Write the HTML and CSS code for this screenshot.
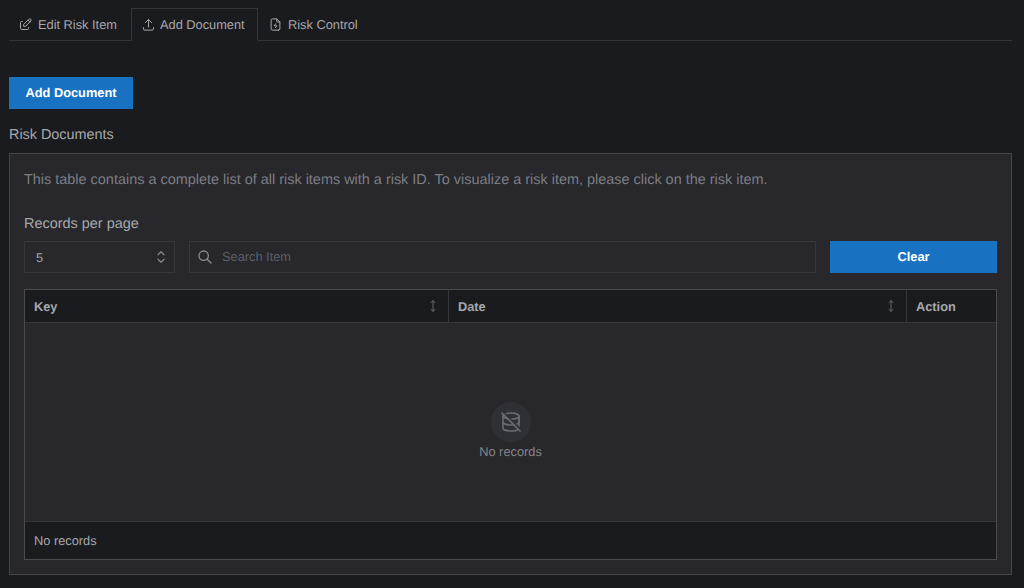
FILE: index.html
```html
<!DOCTYPE html>
<html lang="en">
<head>
<meta charset="utf-8">
<title>Risk Documents</title>
<link rel="stylesheet" href="styles.css">
</head>
<body>
<nav class="tabs">
  <div class="tab tab-first">
    <svg class="tab-icon" viewBox="0 0 24 24"><path d="M7 7h-1a2 2 0 0 0-2 2v9a2 2 0 0 0 2 2h9a2 2 0 0 0 2-2v-1"/><path d="M20.385 6.585a2.1 2.1 0 0 0-2.97-2.970l-8.415 8.385v3h3l8.385-8.415"/><path d="M16 5l3 3"/></svg>
    <span>Edit Risk Item</span>
  </div>
  <div class="tab tab-active">
    <svg class="tab-icon" viewBox="0 0 24 24"><path d="M4 17v2a2 2 0 0 0 2 2h12a2 2 0 0 0 2-2v-2"/><path d="M7 9l5-5 5 5"/><path d="M12 4v12"/></svg>
    <span>Add Document</span>
  </div>
  <div class="tab tab-last">
    <svg class="tab-icon" viewBox="0 0 24 24"><path d="M14 3v4a1 1 0 0 0 1 1h4"/><path d="M17 21h-10a2 2 0 0 1-2-2v-14a2 2 0 0 1 2-2h7l5 5v11a2 2 0 0 1-2 2z"/><path d="M12 11l-2 3h4l-2 3"/></svg>
    <span>Risk Control</span>
  </div>
</nav>

<button class="btn btn-add">Add Document</button>
<h2 class="section-title">Risk Documents</h2>

<section class="panel">
  <p class="intro">This table contains a complete list of all risk items with a risk ID. To visualize a risk item, please click on the risk item.</p>
  <label class="rpp-label">Records per page</label>
  <div class="controls">
    <div class="field select">
      <span>5</span>
      <svg class="chev" viewBox="0 0 24 24"><path d="M8 9l4-4 4 4"/><path d="M16 15l-4 4-4-4"/></svg>
    </div>
    <div class="field search">
      <svg class="search-icon" viewBox="0 0 24 24"><circle cx="10" cy="10" r="7"/><path d="M21 21l-6-6"/></svg>
      <span class="search-text">Search Item</span>
    </div>
    <button class="btn btn-clear">Clear</button>
  </div>
  <div class="table">
    <div class="thead">
      <div class="th th-key"><span>Key</span><svg class="sort" viewBox="0 0 24 24"><path d="M12 4v16"/><path d="M9 7l3-3 3 3"/><path d="M9 17l3 3 3-3"/></svg></div>
      <div class="th th-date"><span>Date</span><svg class="sort" viewBox="0 0 24 24"><path d="M12 4v16"/><path d="M9 7l3-3 3 3"/><path d="M9 17l3 3 3-3"/></svg></div>
      <div class="th th-action"><span>Action</span></div>
    </div>
    <div class="tbody">
      <div class="empty-badge">
        <svg class="empty-icon" viewBox="0 0 24 24"><path d="M12.983 8.978c3.955-.182 7.017-1.446 7.017-2.978c0-1.657-3.582-3-8-3c-1.661 0-3.204.19-4.483.515m-2.783 1.228c-.471.382-.734.808-.734 1.257c0 1.220 1.944 2.271 4.734 2.740"/><path d="M4 6v6c0 1.657 3.582 3 8 3c.986 0 1.930-.067 2.802-.19m3.187-.82c1.251-.53 2.011-1.228 2.011-1.990v-6"/><path d="M4 12v6c0 1.657 3.582 3 8 3c3.217 0 5.991-.712 7.261-1.740m.739-3.260v-9"/><path d="M3 3l18 18"/></svg>
      </div>
      <div class="empty-text">No records</div>
    </div>
    <div class="tfoot">No records</div>
  </div>
</section>
</body>
</html>
```
FILE: styles.css
```css
* { box-sizing: border-box; }
html, body { margin: 0; height: 100%; }
body {
  background: #1a1b1f;
  color: #a6a7ab;
  font-family: "Liberation Sans", Arial, sans-serif;
  font-size: 12.8px;
  text-rendering: geometricPrecision;
  padding: 8px 12px 0 9px;
  overflow: hidden;
}
.tabs {
  display: flex;
  height: 33px;
  border-bottom: 1px solid #33343a;
}
.tab {
  display: flex;
  align-items: center;
  gap: 5px;
  height: 33px;
  padding: 0 14px 0 9px;
  color: #a6a7ab;
  white-space: nowrap;
}
.tab-first { width: 122px; }
.tab-last { padding-left: 10px; }
.tab-active {
  width: 127px;
  border: 1px solid #33343a;
  border-bottom: 1px solid #1a1b1f;
  padding-left: 9px;
  gap: 4px;
}
.tab-icon {
  width: 15px;
  height: 15px;
  fill: none;
  stroke: #a6a7ab;
  stroke-width: 1.6;
  stroke-linecap: round;
  stroke-linejoin: round;
  flex: none;
}
.btn {
  border: 0;
  background: #1971c2;
  color: #fff;
  font: bold 12.8px "Liberation Sans", Arial, sans-serif;
  text-rendering: geometricPrecision;
  padding: 0 0 2px;
  display: block;
}
.btn-add { width: 124px; height: 32px; margin-top: 36px; }
.section-title {
  margin: 17px 0 8px;
  font-size: 14.4px;
  line-height: 19px;
  font-weight: 400;
  color: #a6a7ab;
}
.panel {
  height: 422px;
  background: #27272c;
  border: 1px solid #44454b;
  padding: 17px 14px 14px;
}
.intro {
  margin: 0;
  font-size: 14.44px;
  line-height: 18px;
  color: #7d7e84;
}
.rpp-label {
  display: block;
  margin-top: 26px;
  font-size: 14.44px;
  line-height: 18px;
  color: #a6a7ab;
}
.controls {
  display: flex;
  gap: 14px;
  margin-top: 8px;
  height: 32px;
}
.field {
  display: flex;
  align-items: center;
  background: #27272c;
  border: 1px solid #36373c;
  height: 32px;
}
.select {
  width: 151px;
  padding: 0 4px 0 11px;
  justify-content: space-between;
  color: #a6a7ab;
}
.chev {
  width: 18px;
  height: 18px;
  fill: none;
  stroke: #8b8c90;
  stroke-width: 1.5;
  stroke-linecap: round;
  stroke-linejoin: round;
}
.search {
  flex: 1;
  padding-left: 7px;
  gap: 9px;
  color: #5c5f66;
}
.search-text { padding-bottom: 1px; }
.search-icon {
  width: 16px;
  height: 16px;
  fill: none;
  stroke: #8b8c90;
  stroke-width: 2;
  stroke-linecap: round;
}
.btn-clear { width: 167px; height: 32px; }
.table {
  margin-top: 16px;
  height: 271px;
  border: 1px solid #4a4b50;
  display: flex;
  flex-direction: column;
}
.thead {
  display: flex;
  height: 33px;
  background: #1a1b1f;
  border-bottom: 1px solid #36373c;
  flex: none;
}
.th {
  display: flex;
  align-items: center;
  justify-content: space-between;
  padding: 0 7px 0 9px;
  font-weight: 700;
  color: #a6a7ab;
  border-right: 1px solid #36373c;
}
.th-key { width: 424px; }
.th-date { width: 458px; }
.th-action { flex: 1; border-right: 0; }
.sort {
  width: 16px;
  height: 16px;
  fill: none;
  stroke: #66676c;
  stroke-width: 1.5;
  stroke-linecap: round;
  stroke-linejoin: round;
}
.tbody {
  flex: 1;
  display: flex;
  flex-direction: column;
  align-items: center;
  padding-top: 79px;
}
.empty-badge {
  width: 40px;
  height: 40px;
  border-radius: 50%;
  background: #2f3035;
  display: flex;
  align-items: center;
  justify-content: center;
}
.empty-icon {
  width: 24px;
  height: 24px;
  fill: none;
  stroke: #6a6b70;
  stroke-width: 1.6;
  stroke-linecap: round;
  stroke-linejoin: round;
}
.empty-text {
  margin-top: 1px;
  line-height: 18px;
  color: #84858a;
}
.tfoot {
  height: 38px;
  flex: none;
  background: #1a1b1f;
  border-top: 1px solid #36373c;
  display: flex;
  align-items: center;
  padding: 0 9px;
  color: #a6a7ab;
}
```
